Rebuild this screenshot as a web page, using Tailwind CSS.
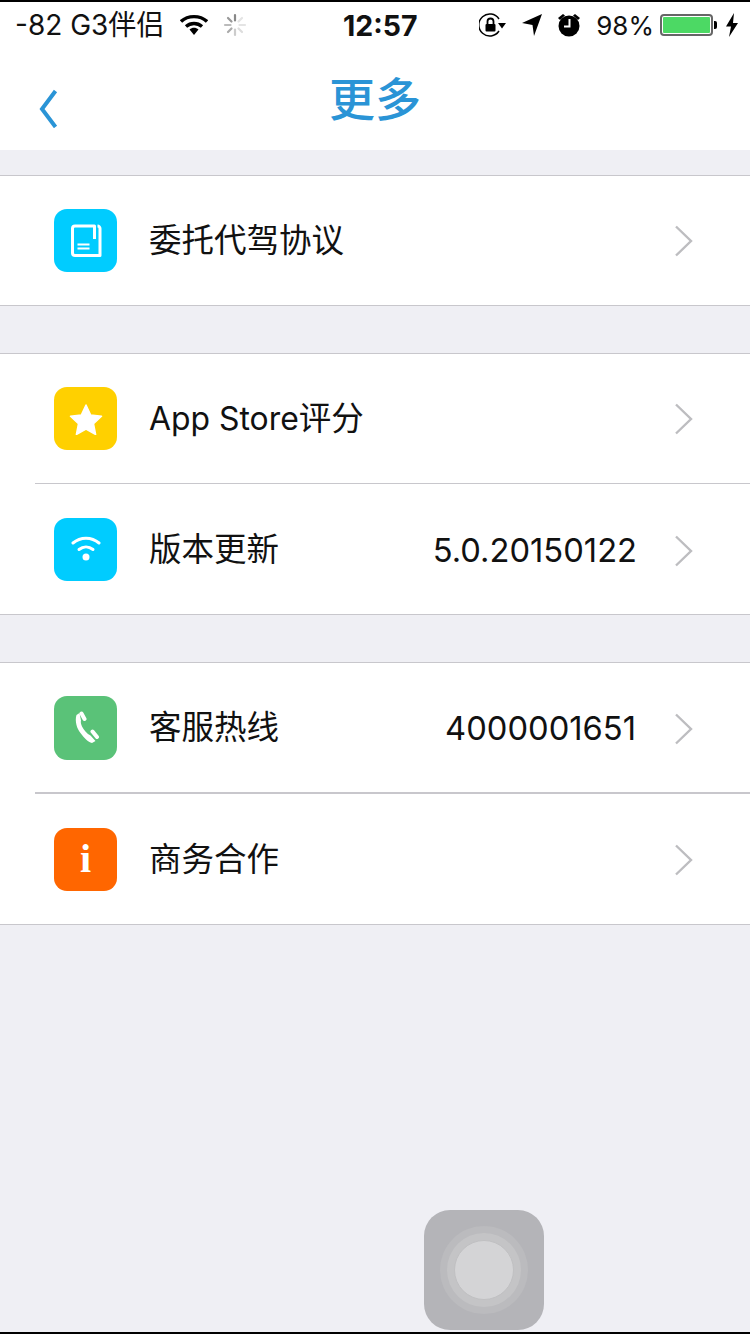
<!DOCTYPE html><html lang="zh-CN">
<head><meta charset="UTF-8"/><meta name="viewport" content="width=device-width, initial-scale=1.0"/>
<title>更多</title><script src="https://cdn.jsdelivr.net/npm/@tailwindcss/browser@4"></script></head>
<body class="relative w-[750px] h-[1334px] overflow-hidden bg-[#efeff4] font-['Inter','Noto_Sans_CJK_SC',sans-serif] text-[#111]">

<!-- STATUS BAR -->
<div class="h-[48px] bg-white border-t-2 border-black flex items-center pl-[15px] pr-[11px] text-[28px] relative">
  <span class="whitespace-nowrap">-82 G3伴侣</span>
  <svg class="ml-[16px]" width="28" height="22" viewBox="0 0 28 22"><path d="M1 7.500C8 1 20 1 27 7.500" fill="none" stroke="#000" stroke-width="3.400"/><path d="M6 12.500c4.600-4 11.400-4 16 0" fill="none" stroke="#000" stroke-width="3.400"/><path d="M9.500 15.500c2.800-2.200 6.200-2.200 9 0L14 21z" fill="#000"/></svg>
  <svg class="ml-[15px]" width="24" height="24" viewBox="0 0 24 24" fill="none" stroke-width="2.200" stroke-linecap="round"><path d="M12 2v5.500" stroke="#888"/><path d="M19 5l-3.500 3.500" stroke="#e4e4e4"/><path d="M22 12h-5.500" stroke="#e4e4e4"/><path d="M19 19l-3.500-3.500" stroke="#ddd"/><path d="M12 22v-5.500" stroke="#ccc"/><path d="M5 19l3.500-3.500" stroke="#aaa"/><path d="M2 12h5.500" stroke="#bbb"/><path d="M5 5l3.500 3.500" stroke="#999"/></svg>
  <span class="absolute left-[343px] top-[7px] font-bold text-[28.500px] leading-[34px]">12:57</span>
  <div class="ml-auto flex items-center">
    <svg width="28" height="26" viewBox="0 0 28 26" fill="none"><path d="M20 7A11 11 0 1 0 20 19" stroke="#000" stroke-width="1.500"/><path d="M19 11h8l-4 5.500z" fill="#000"/><rect x="6.500" y="12" width="10" height="7.500" rx="1" fill="#000"/><path d="M8.500 12V9.500a3 3 0 0 1 6 0V12" stroke="#000" stroke-width="1.800"/></svg>
    <svg class="ml-[14px]" width="22" height="24" viewBox="0 0 22 24"><path d="M1 10L21 1 13 23 11.500 12z" fill="#000"/></svg>
    <svg class="ml-[14px]" width="24" height="26" viewBox="0 0 24 26"><path d="M1 6l5-4 2 1.500L3 8zM23 6l-5-4-2 1.500L21 8z" fill="#000"/><circle cx="12" cy="14" r="10.500" fill="#000"/><path d="M12.500 7v7.500H7" fill="none" stroke="#fff" stroke-width="2"/></svg>
    <span class="ml-[15px] text-[26px]">98%</span>
    <div class="ml-[6px] w-[53px] h-[22px] border-2 border-[#666] rounded-[4px] p-[1px] bg-white"><div class="w-full h-full bg-[#4cd964] rounded-[1px]"></div></div>
    <div class="w-[3px] h-[8px] bg-black rounded-r-[2px] ml-[1px]"></div>
    <svg class="ml-[8px]" width="14" height="24" viewBox="0 0 14 24"><path d="M9 0L1 13.500h5L4 24l9-14H8z" fill="#000"/></svg>
  </div>
</div>

<!-- NAV -->
<header class="h-[102px] bg-white relative flex items-center justify-center">
  <svg class="absolute left-[38px] top-[40px]" width="20" height="40" viewBox="0 0 20 40"><path d="M17.500 3L4 21l13.500 18" fill="none" stroke="#2a94d6" stroke-width="4"/></svg>
  <h1 class="text-[#2a94d6] text-[46px] leading-none font-medium">更多</h1>
</header>

<main class="pt-[25px] flex flex-col gap-[47px]">

  <!-- GROUP 1 -->
  <section class="bg-white border-y border-[#c8c7cc]">
    <div class="h-[129px] pl-[54px] pr-[56px] flex items-center">
      <div class="w-[63px] h-[63px] rounded-[13px] bg-[#00ccff] flex items-center justify-center">
        <svg width="34" height="34" viewBox="0 0 34 34" fill="none" stroke="#fff" stroke-width="3"><path d="M25.500 15V2H6a2.500 2.500 0 0 0-2.500 2.500V29A2.500 2.500 0 0 0 6 31.500h25V4.500A2.500 2.500 0 0 0 28.500 2" stroke-linejoin="round"/><path d="M8.500 20.500h12M8.500 24.500h12" stroke-width="2.200"/></svg>
      </div>
      <span class="ml-[32px] text-[32.500px] pt-[2px]">委托代驾协议</span>
      <svg class="ml-auto" width="20" height="32" viewBox="0 0 20 32"><path d="M2 1.500L17 16 2 30.500" fill="none" stroke="#bdbdc0" stroke-width="2.400"/></svg>
    </div>
  </section>

  <!-- GROUP 2 -->
  <section class="bg-white border-y border-[#c8c7cc]">
    <div class="h-[129px] pl-[54px] pr-[56px] flex items-center">
      <div class="w-[63px] h-[63px] rounded-[13px] bg-[#ffd000] flex items-center justify-center">
        <svg width="34" height="32" viewBox="0 0 34 32"><path d="M17 2l4.700 10 10.800 1.300-8 7.400 2.100 10.800L17 26.200 7.400 31.500l2.100-10.800-8-7.400L12.300 12z" fill="#fff" stroke="#fff" stroke-width="1.500" stroke-linejoin="round"/></svg>
      </div>
      <span class="ml-[32px] text-[32.500px] pt-[2px]"><span class="text-[31.900px]">App Store</span>评分</span>
      <svg class="ml-auto" width="20" height="32" viewBox="0 0 20 32"><path d="M2 1.500L17 16 2 30.500" fill="none" stroke="#bdbdc0" stroke-width="2.400"/></svg>
    </div>
    <div class="ml-[35px] h-px bg-[#c8c7cc]"></div>
    <div class="h-[130px] pl-[54px] pr-[56px] flex items-center">
      <div class="w-[63px] h-[63px] rounded-[13px] bg-[#00ccff] flex items-center justify-center">
        <svg width="30" height="30" viewBox="0 0 30 30" fill="none" stroke="#fff" stroke-width="3" stroke-linecap="round"><path d="M2 9C9.500 2.500 20.500 2.500 28 9"/><path d="M8 15.500c4.200-3.500 9.800-3.500 14 0"/><circle cx="15" cy="23" r="3.500" fill="#fff" stroke="none"/></svg>
      </div>
      <span class="ml-[32px] text-[32.500px] pt-[3px]">版本更新</span>
      <span class="ml-auto text-[32.700px] pt-[3px]">5.0.20150122</span>
      <svg class="ml-[37px] mt-[3px]" width="20" height="32" viewBox="0 0 20 32"><path d="M2 1.500L17 16 2 30.500" fill="none" stroke="#bdbdc0" stroke-width="2.400"/></svg>
    </div>
  </section>

  <!-- GROUP 3 -->
  <section class="bg-white border-y border-[#c8c7cc]">
    <div class="h-[129px] pl-[54px] pr-[56px] flex items-center">
      <div class="w-[63px] h-[64px] rounded-[13px] bg-[#5ac278] flex items-center justify-center">
        <svg width="28" height="34" viewBox="0 0 28 34"><path d="M7.500 2L4.500 4C2.500 10 5 18 8.500 22c3.500 5 7.500 9 11.500 10l3.500-2-5-5.500c-3.500-1.500-6.500-5.500-8.500-9C9 13 8.500 11 9 9.500z" fill="#fff"/><path d="M9.500 2.500L12.500 8M20.500 20.500L25 26" stroke="#fff" stroke-width="4" stroke-linecap="round"/></svg>
      </div>
      <span class="ml-[32px] text-[32.500px] pt-[2px]">客服热线</span>
      <span class="ml-auto text-[32.700px] pt-[2px]">4000001651</span>
      <svg class="ml-[38px] mt-[2px]" width="20" height="32" viewBox="0 0 20 32"><path d="M2 1.500L17 16 2 30.500" fill="none" stroke="#bdbdc0" stroke-width="2.400"/></svg>
    </div>
    <div class="ml-[35px] h-[2px] bg-[#c8c7cc]"></div>
    <div class="h-[130px] pl-[54px] pr-[56px] flex items-center">
      <div class="w-[63px] h-[63px] rounded-[13px] bg-[#ff6600] flex items-center justify-center">
        <span class="text-white text-[40px] font-bold leading-none font-['Liberation_Serif',serif]">i</span>
      </div>
      <span class="ml-[32px] text-[32.500px] pt-[2px]">商务合作</span>
      <svg class="ml-auto mt-[2px]" width="20" height="32" viewBox="0 0 20 32"><path d="M2 1.500L17 16 2 30.500" fill="none" stroke="#bdbdc0" stroke-width="2.400"/></svg>
    </div>
  </section>
</main>

<!-- ASSISTIVE TOUCH -->
<div class="absolute left-[424px] top-[1210px] w-[120px] h-[120px] rounded-[26px] bg-[#b4b4b8] flex items-center justify-center">
  <div class="w-[88px] h-[88px] rounded-full bg-[#bbbbbe] flex items-center justify-center">
    <div class="w-[74px] h-[74px] rounded-full bg-[#c4c4c6] flex items-center justify-center">
      <div class="w-[60px] h-[60px] rounded-full bg-[#d4d4d6] border border-[#c0c0c2]"></div>
    </div>
  </div>
</div>

<div class="absolute left-0 bottom-0 w-full h-[2px] bg-black"></div>
</body></html>
